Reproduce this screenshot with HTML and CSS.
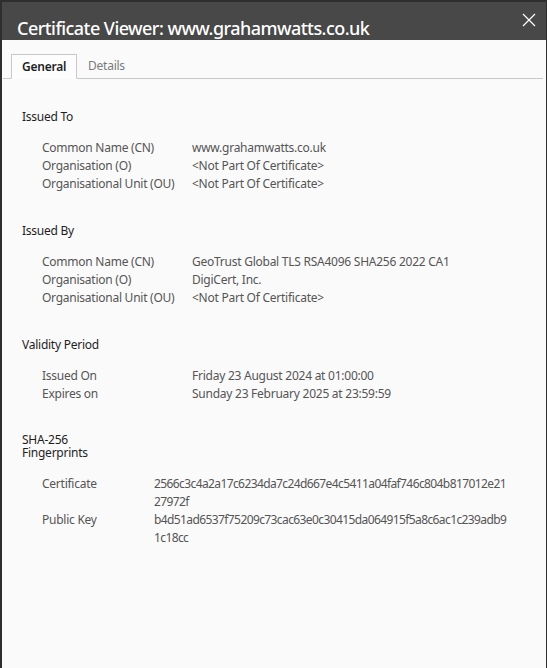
FILE: index.html
```html
<!DOCTYPE html>
<html>
<head>
<meta charset="utf-8">
<link rel="stylesheet" href="styles.css">
</head>
<body>
<div class="dialog">
  <header class="titlebar">
    <h1 class="title">Certificate Viewer: www.grahamwatts.co.uk</h1>
    <svg class="close" width="14" height="14" viewBox="0 0 14 14"><path d="M1 1L13 13M13 1L1 13" stroke="#fff" stroke-width="1.2" fill="none"/></svg>
  </header>
  <div class="content">
    <nav class="tabs">
      <div class="tab active">General</div>
      <div class="tab">Details</div>
    </nav>
    <section class="section">
      <h2 class="heading">Issued To</h2>
      <div class="rows">
        <div class="label">Common Name (CN)</div><div class="value">www.grahamwatts.co.uk</div>
        <div class="label">Organisation (O)</div><div class="value">&lt;Not Part Of Certificate&gt;</div>
        <div class="label">Organisational Unit (OU)</div><div class="value">&lt;Not Part Of Certificate&gt;</div>
      </div>
    </section>
    <section class="section">
      <h2 class="heading">Issued By</h2>
      <div class="rows">
        <div class="label">Common Name (CN)</div><div class="value">GeoTrust Global TLS RSA4096 SHA256 2022 CA1</div>
        <div class="label">Organisation (O)</div><div class="value">DigiCert, Inc.</div>
        <div class="label">Organisational Unit (OU)</div><div class="value">&lt;Not Part Of Certificate&gt;</div>
      </div>
    </section>
    <section class="section">
      <h2 class="heading">Validity Period</h2>
      <div class="rows">
        <div class="label">Issued On</div><div class="value">Friday 23 August 2024 at 01:00:00</div>
        <div class="label">Expires on</div><div class="value">Sunday 23 February 2025 at 23:59:59</div>
      </div>
    </section>
    <section class="section">
      <h2 class="heading narrow">SHA-256 Fingerprints</h2>
      <div class="rows fp">
        <div class="label">Certificate</div><div class="value hash">2566c3c4a2a17c6234da7c24d667e4c5411a04faf746c804b817012e2127972f</div>
        <div class="label">Public Key</div><div class="value hash">b4d51ad6537f75209c73cac63e0c30415da064915f5a8c6ac1c239adb91c18cc</div>
      </div>
    </section>
  </div>
</div>
</body>
</html>
```
FILE: styles.css
```css
html, body {
  margin: 0;
  padding: 0;
  height: 100%;
  background: #2e2e2e;
}
body {
  font-family: "Noto Sans", "Open Sans", sans-serif;
  padding: 2px 1px 0 2px;
  box-sizing: border-box;
}
.dialog {
  height: 100%;
  display: flex;
  flex-direction: column;
  background: #fafafa;
}
.titlebar {
  height: 38px;
  background: #484848;
  display: flex;
  align-items: center;
  justify-content: space-between;
  padding: 0 10px 0 15px;
  flex: none;
}
.title {
  margin: 0;
  color: #fff;
  font-size: 18px;
  font-weight: 500;
  letter-spacing: -0.55px;
  padding-top: 13px;
}
.close {
  align-self: flex-start;
  margin-top: 11px;
}
.content {
  flex: 1;
  padding: 14px 3px 0 1px;
}
.tabs {
  display: flex;
  border-bottom: 1px solid #c8c8c8;
  padding-left: 8px;
  height: 24px;
}
.tab {
  font-size: 12px;
  letter-spacing: -0.25px;
  color: #7a7a7a;
  padding: 0 11px;
  line-height: 24px;
  margin-bottom: -1px;
}
.tab.active {
  color: #1e1e1e;
  font-weight: 600;
  background: #fdfdfd;
  border: 1px solid #c8c8c8;
  border-bottom: 1px solid #fdfdfd;
  line-height: 23px;
  padding: 0 10px;
}
.section {
  padding: 0 0 0 19px;
  margin-top: 29px;
}
.heading {
  margin: 0;
  font-size: 12px;
  font-weight: 400;
  letter-spacing: -0.25px;
  color: #1e1e1e;
  line-height: 18px;
}
.heading.narrow {
  width: 80px;
  line-height: 13px;
  padding-top: 1px;
}
.rows {
  display: grid;
  grid-template-columns: 150px 1fr;
  margin-top: 13px;
  padding-left: 20px;
  font-size: 12px;
  letter-spacing: -0.25px;
  line-height: 18px;
  color: #555;
}
.rows.fp {
  grid-template-columns: 112px 355px;
  margin-top: 16px;
}
.hash {
  word-break: break-all;
  letter-spacing: -0.6px;
}
```
